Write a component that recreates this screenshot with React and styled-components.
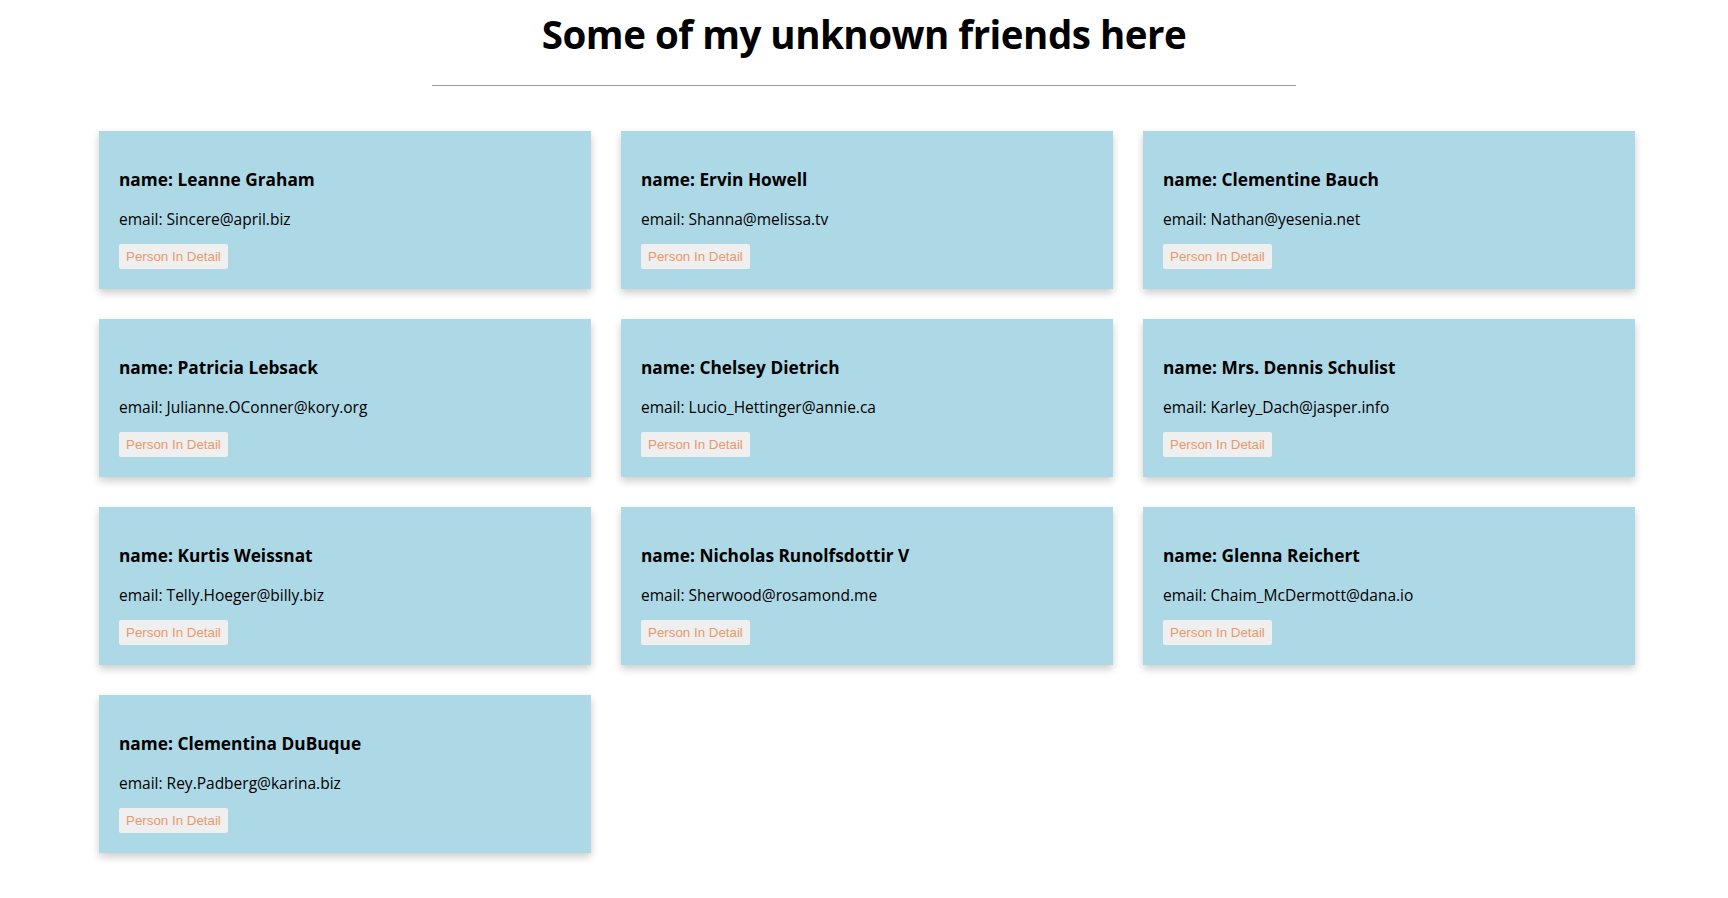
import React from "react";
import styled, { createGlobalStyle } from "styled-components";

const GlobalStyle = createGlobalStyle`
  body {
    margin: 0;
    background: #ffffff;
    font-family: "Open Sans", "Noto Sans", sans-serif;
    color: #000;
  }
`;

const Page = styled.div`
  padding-top: 10px;
  padding-bottom: 40px;
`;

const Title = styled.h1`
  margin: 0;
  text-align: center;
  font-size: 38.5px;
  line-height: 48px;
  font-weight: 700;
  letter-spacing: -0.5px;
`;

const Rule = styled.hr`
  width: 50%;
  margin: 27px auto 0;
  border: none;
  border-top: 1px solid #9a9a9a;
  height: 0;
`;

const Grid = styled.div`
  display: grid;
  grid-template-columns: repeat(3, 492px);
  gap: 30px;
  padding: 45px 0 0 99px;
`;

const Card = styled.div`
  box-sizing: border-box;
  height: 158px;
  background: #add8e6;
  box-shadow: 0 4px 8px 0 rgba(0, 0, 0, 0.2);
  padding: 36px 20px 0;
  display: flex;
  flex-direction: column;
  align-items: flex-start;
`;

const Name = styled.h3`
  margin: 0;
  font-size: 17.3px;
  line-height: 26px;
  font-weight: 700;
`;

const Email = styled.p`
  margin: 14px 0 0;
  font-size: 15.5px;
  line-height: 24px;
`;

const DetailButton = styled.button`
  margin-top: 13px;
  height: 25px;
  padding: 0 7px;
  border: none;
  border-radius: 2px;
  background: #efefef;
  color: #e8996a;
  font-family: "Liberation Sans", Arial, sans-serif;
  font-size: 13.33px;
  cursor: pointer;
`;

const people = [
  { name: "Leanne Graham", email: "Sincere@april.biz" },
  { name: "Ervin Howell", email: "Shanna@melissa.tv" },
  { name: "Clementine Bauch", email: "Nathan@yesenia.net" },
  { name: "Patricia Lebsack", email: "Julianne.OConner@kory.org" },
  { name: "Chelsey Dietrich", email: "Lucio_Hettinger@annie.ca" },
  { name: "Mrs. Dennis Schulist", email: "Karley_Dach@jasper.info" },
  { name: "Kurtis Weissnat", email: "Telly.Hoeger@billy.biz" },
  { name: "Nicholas Runolfsdottir V", email: "Sherwood@rosamond.me" },
  { name: "Glenna Reichert", email: "Chaim_McDermott@dana.io" },
  { name: "Clementina DuBuque", email: "Rey.Padberg@karina.biz" },
];

export default function App() {
  return (
    <Page>
      <GlobalStyle />
      <Title>Some of my unknown friends here</Title>
      <Rule />
      <Grid>
        {people.map((p) => (
          <Card key={p.name}>
            <Name>name: {p.name}</Name>
            <Email>email: {p.email}</Email>
            <DetailButton>Person In Detail</DetailButton>
          </Card>
        ))}
      </Grid>
    </Page>
  );
}
